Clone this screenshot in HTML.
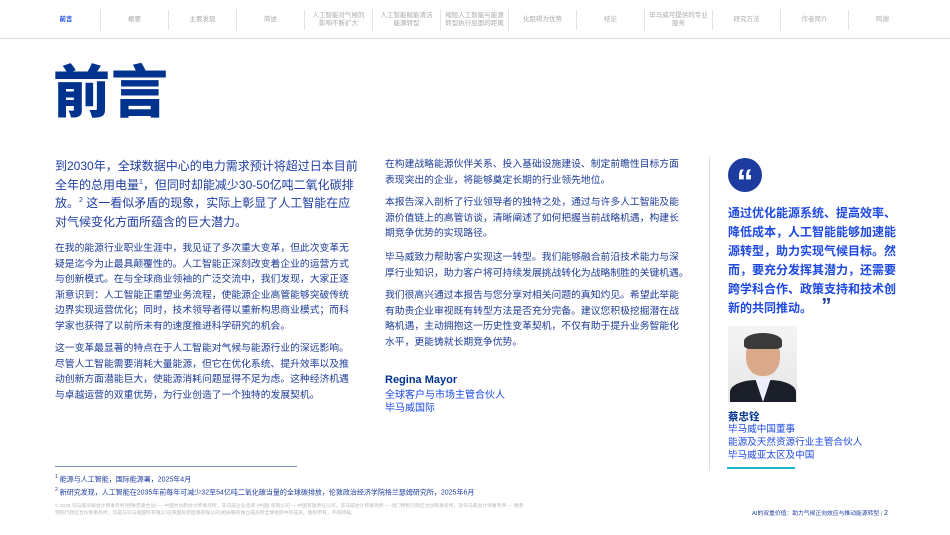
<!DOCTYPE html>
<html><head><meta charset="utf-8"><style>
*{margin:0;padding:0;box-sizing:border-box}
body{width:950px;height:535px;background:#fff;font-family:"Liberation Sans","Noto Sans CJK SC",sans-serif;position:relative;overflow:hidden;color:#1e3c96}
.nav{position:absolute;top:0;left:0;width:950px;height:39px;border-bottom:1.5px solid #ddd}
.nav div{position:absolute;top:10px;height:20px;width:68px;text-align:center;font-size:6.5px;color:#aaa;line-height:8px;display:flex;align-items:center;justify-content:center;border-left:1px solid #e4e4e4}
.nav div.first{border-left:none;color:#1e49e2;font-weight:bold}
.a{position:absolute;white-space:nowrap}
h1{position:absolute;left:53px;top:58px;font-size:57px;color:#00338d;font-weight:900;letter-spacing:1px;line-height:70px}
.intro{font-size:12px;line-height:18.6px;color:#1e3ca0}
.intro sup{font-size:7px;line-height:0;vertical-align:0;position:relative;top:-5px}
.p{font-size:9.8px;line-height:15.6px;color:#1e3c96}
.q{font-size:12px;line-height:19px;color:#1e49e2;font-weight:bold}
</style></head><body>
<div class="nav">
<div class="first" style="left:32px">前言</div>
<div style="left:100px">概要</div>
<div style="left:168px">主要发现</div>
<div style="left:236px">简述</div>
<div style="left:304px">人工智能对气候的<br>影响不断扩大</div>
<div style="left:372px">人工智能赋能清洁<br>能源转型</div>
<div style="left:440px">缩短人工智能与能源<br>转型执行层面的距离</div>
<div style="left:508px">化阻碍为优势</div>
<div style="left:576px">结论</div>
<div style="left:644px">毕马威可提供的专业<br>服务</div>
<div style="left:712px">研究方法</div>
<div style="left:780px">作者简介</div>
<div style="left:848px">鸣谢</div>
</div>
<h1>前言</h1>
<div class="a intro" style="left:55px;top:157px">到2030年，全球数据中心的电力需求预计将超过日本目前<br>全年的总用电量<sup>1</sup>，但同时却能减少30-50亿吨二氧化碳排<br>放。<sup>2</sup> 这一看似矛盾的现象，实际上彰显了人工智能在应<br>对气候变化方面所蕴含的巨大潜力。</div>
<div class="a p" style="left:55px;top:241px">在我的能源行业职业生涯中，我见证了多次重大变革，但此次变革无<br>疑是迄今为止最具颠覆性的。人工智能正深刻改变着企业的运营方式<br>与创新模式。在与全球商业领袖的广泛交流中，我们发现，大家正逐<br>渐意识到：人工智能正重塑业务流程，使能源企业高管能够突破传统<br>边界实现运营优化；同时，技术领导者得以重新构思商业模式；而科<br>学家也获得了以前所未有的速度推进科学研究的机会。</div>
<div class="a p" style="left:55px;top:341px">这一变革最显著的特点在于人工智能对气候与能源行业的深远影响。<br>尽管人工智能需要消耗大量能源，但它在优化系统、提升效率以及推<br>动创新方面潜能巨大，使能源消耗问题显得不足为虑。这种经济机遇<br>与卓越运营的双重优势，为行业创造了一个独特的发展契机。</div>
<div class="a p" style="left:385px;top:157px">在构建战略能源伙伴关系、投入基础设施建设、制定前瞻性目标方面<br>表现突出的企业，将能够奠定长期的行业领先地位。</div>
<div class="a p" style="left:385px;top:195px">本报告深入剖析了行业领导者的独特之处，通过与许多人工智能及能<br>源价值链上的高管访谈，清晰阐述了如何把握当前战略机遇，构建长<br>期竞争优势的实现路径。</div>
<div class="a p" style="left:385px;top:250px">毕马威致力帮助客户实现这一转型。我们能够融合前沿技术能力与深<br>厚行业知识，助力客户将可持续发展挑战转化为战略制胜的关键机遇。</div>
<div class="a p" style="left:385px;top:288px">我们很高兴通过本报告与您分享对相关问题的真知灼见。希望此举能<br>有助贵企业审视既有转型方法是否充分完备。建议您积极挖掘潜在战<br>略机遇，主动拥抱这一历史性变革契机，不仅有助于提升业务智能化<br>水平，更能铸就长期竞争优势。</div>
<div class="a" style="left:385px;top:374px;font-size:11px;font-weight:bold;color:#00338d">Regina Mayor</div>
<div class="a" style="left:385px;top:390px;font-size:10px;line-height:12.5px;color:#1e49e2">全球客户与市场主管合伙人<br>毕马威国际</div>
<div class="a" style="left:709px;top:157px;width:1px;height:313px;background:#ddd"></div>
<div class="a" style="left:728px;top:158px;width:34px;height:34px;border-radius:50%;background:#1e3ca0;color:#fff;font:bold 34px/48px 'Liberation Sans',sans-serif;text-align:center">“</div>
<div class="a q" style="left:728px;top:204px">通过优化能源系统、提高效率、<br>降低成本，人工智能能够加速能<br>源转型，助力实现气候目标。然<br>而，要充分发挥其潜力，还需要<br>跨学科合作、政策支持和技术创<br>新的共同推动。 <span style="font:bold 20px/10px 'Liberation Sans',sans-serif;color:#1e3ca0;margin-left:6px">”</span></div>
<div class="a" style="left:728px;top:326px;width:69px;height:76px;background:linear-gradient(#f4f4f4,#e6e6e6);overflow:hidden">
<div style="position:absolute;left:18px;top:10px;width:34px;height:40px;border-radius:45%;background:#d9a98a"></div>
<div style="position:absolute;left:16px;top:7px;width:38px;height:16px;border-radius:50% 50% 20% 20%;background:#3a3a3a"></div>
<div style="position:absolute;left:2px;top:54px;width:66px;height:30px;border-radius:40% 40% 0 0;background:#1b1f2a"></div>
<div style="position:absolute;left:27px;top:52px;width:16px;height:24px;background:#eef;clip-path:polygon(0 0,100% 0,50% 100%)"></div>
</div>
<div class="a" style="left:728px;top:409px;font-size:10.5px;font-weight:bold;color:#00338d">蔡忠铨</div>
<div class="a" style="left:728px;top:423px;font-size:9.6px;line-height:13px;color:#1e49e2">毕马威中国董事<br>能源及天然资源行业主管合伙人<br>毕马威亚太区及中国</div>
<div class="a" style="left:727px;top:467px;width:68px;height:1.5px;background:#1fb7d0"></div>
<div class="a" style="left:55px;top:466px;width:242px;height:1px;background:#7a8fb5"></div>
<div class="a" style="left:55px;top:472px;font-size:7px;line-height:11px;color:#1e3ca0"><sup style="font-size:5px">1</sup> 能源与人工智能，国际能源署，2025年4月<br><sup style="font-size:5px">2</sup> 新研究发现，人工智能在2035年前每年可减少32至54亿吨二氧化碳当量的全球碳排放，伦敦政治经济学院格兰瑟姆研究所，2025年6月</div>
<div class="a" style="left:55px;top:503px;white-space:normal;width:470px;font-size:4.8px;line-height:7px;color:#b8b8b8">© 2025 毕马威华振会计师事务所(特殊普通合伙) — 中国合伙制会计师事务所，毕马威企业咨询 (中国) 有限公司 — 中国有限责任公司，毕马威会计师事务所 — 澳门特别行政区合伙制事务所，及毕马威会计师事务所 — 香港特别行政区合伙制事务所，均是与毕马威国际有限公司(英国私营担保有限公司)相关联的独立成员所全球组织中的成员。版权所有，不得转载。</div>
<div class="a" style="left:752px;top:508px;font-size:5.8px;color:#1e3ca0">AI的双重价值：助力气候正向效应与推动能源转型 <span style="color:#888">|</span> <span style="font-size:7px">2</span></div>
</body></html>
